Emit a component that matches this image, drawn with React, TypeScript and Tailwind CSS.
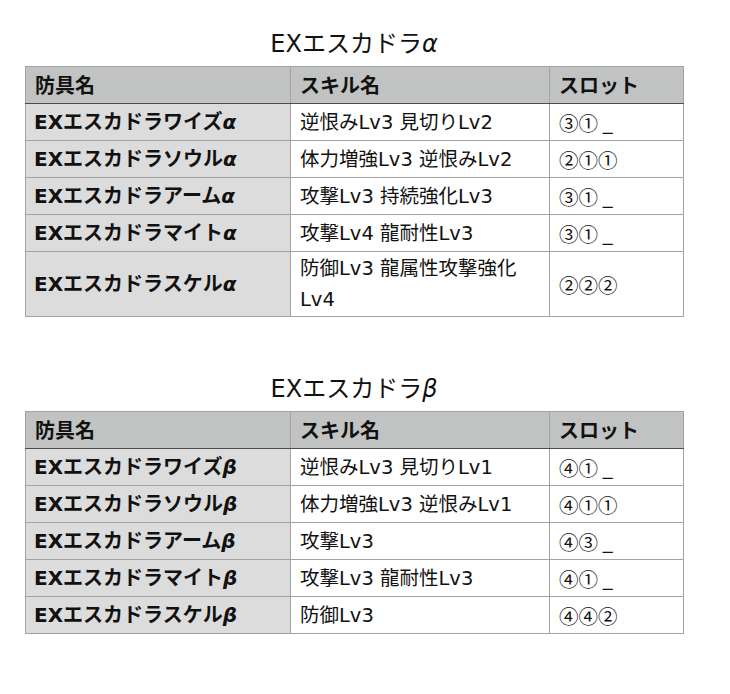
import React from "react";

type Row = { name: string; skill: React.ReactNode; slot: string };

const Greek = ({ c }: { c: string }) => <span className="italic">{c}</span>;

const alpha: Row[] = [
  { name: "EXエスカドラワイズ", skill: "逆恨みLv3 見切りLv2", slot: "③① _" },
  { name: "EXエスカドラソウル", skill: "体力増強Lv3 逆恨みLv2", slot: "②①①" },
  { name: "EXエスカドラアーム", skill: "攻撃Lv3 持続強化Lv3", slot: "③① _" },
  { name: "EXエスカドラマイト", skill: "攻撃Lv4 龍耐性Lv3", slot: "③① _" },
  {
    name: "EXエスカドラスケル",
    skill: (
      <>
        防御Lv3 龍属性攻撃強化
        <br />
        Lv4
      </>
    ),
    slot: "②②②",
  },
];

const beta: Row[] = [
  { name: "EXエスカドラワイズ", skill: "逆恨みLv3 見切りLv1", slot: "④① _" },
  { name: "EXエスカドラソウル", skill: "体力増強Lv3 逆恨みLv1", slot: "④①①" },
  { name: "EXエスカドラアーム", skill: "攻撃Lv3", slot: "④③ _" },
  { name: "EXエスカドラマイト", skill: "攻撃Lv3 龍耐性Lv3", slot: "④① _" },
  { name: "EXエスカドラスケル", skill: "防御Lv3", slot: "④④②" },
];

const latin = { fontFamily: '"DejaVu Sans", "Noto Sans CJK JP", sans-serif' };
const cjk = { fontFamily: '"Noto Sans CJK JP", sans-serif' };

function Section({ g, rows, first }: { g: string; rows: Row[]; first?: boolean }) {
  return (
    <section className={first ? "" : "mt-[56px]"}>
      <h2
        className="w-[658px] text-center text-[24px] leading-[32px] font-normal text-[#111] mb-[6px]"
        style={latin}
      >
        EXエスカドラ<Greek c={g} />
      </h2>
      <table className="w-[658px] border-collapse table-fixed text-[19.5px] text-[#111]">
        <colgroup>
          <col className="w-[265px]" />
          <col className="w-[259px]" />
          <col className="w-[134px]" />
        </colgroup>
        <thead>
          <tr className="h-[37px] bg-[#c1c3c2] text-[20px]" style={cjk}>
            <th className="border border-[#a3a3a3] border-b-[#4d4d4d] pl-[9px] pr-[8px] text-left font-bold leading-[30px]">防具名</th>
            <th className="border border-[#a3a3a3] border-b-[#4d4d4d] pl-[9px] pr-[8px] text-left font-bold leading-[30px]">スキル名</th>
            <th className="border border-[#a3a3a3] border-b-[#4d4d4d] pl-[9px] pr-[8px] text-left font-bold leading-[30px]">スロット</th>
          </tr>
        </thead>
        <tbody>
          {rows.map((r, i) => (
            <tr key={i} className="h-[37px]">
              <td className="border border-[#a3a3a3] bg-[#dcdcdc] pl-[8px] pr-[6px] text-[20px] font-bold leading-[31px]" style={latin}>
                {r.name}
                <Greek c={g} />
              </td>
              <td className="border border-[#a3a3a3] bg-white pl-[9px] pr-[6px] py-[1px] leading-[31px]" style={latin}>
                {r.skill}
              </td>
              <td className="border border-[#a3a3a3] bg-white pl-[9px] pr-[6px] leading-[31px]" style={cjk}>
                {r.slot}
              </td>
            </tr>
          ))}
        </tbody>
      </table>
    </section>
  );
}

export default function App() {
  return (
    <div className="min-h-[694px] w-[730px] bg-white pl-[25px] pt-[28px]">
      <Section g="α" rows={alpha} first />
      <Section g="β" rows={beta} />
    </div>
  );
}
